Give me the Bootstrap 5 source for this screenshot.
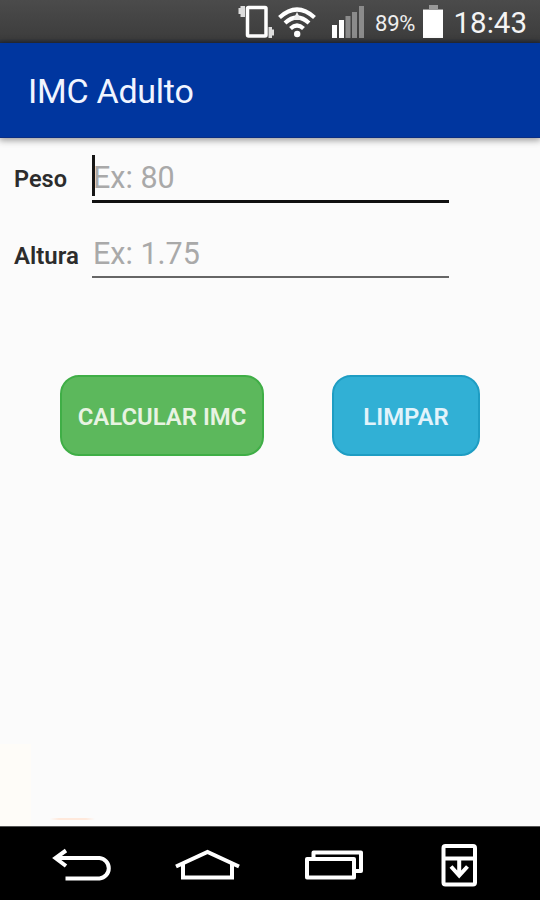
<!DOCTYPE html>
<html lang="pt-BR">
<head>
<meta charset="utf-8">
<meta name="viewport" content="width=device-width, initial-scale=1">
<title>IMC Adulto</title>
<link href="https://cdn.jsdelivr.net/npm/bootstrap@5.3.0/dist/css/bootstrap.min.css" rel="stylesheet">
<style>
body { font-family: Roboto, "Noto Sans", sans-serif; background: #fbfbfb; line-height: 1; }
.screen { width: 540px; height: 900px; }
.status-bar { height: 43px; padding: 0 13px 0 238px; background: linear-gradient(#4b4b4b, #3d3d3d 90%, #292f3d); color: #f4f4f4; }
.status-icons { width: 128px; height: 43px; }
.pct { font-size: 22px; margin: 5px 0 0 9px; width: 48px; letter-spacing: -.2px; color: #eee; }
.battery { width: 21px; height: 43px; }
.clock { font-size: 29.5px; margin: 5px 0 0 auto; }
.title-bar { height: 95px; padding: 2px 28px 0; background: #00369f; box-shadow: 0 1px 7px 1px rgba(0,0,0,.42); border-bottom: 1px solid #0a2d82; z-index: 1; }
.title-bar h1 { font-size: 34px; font-weight: 400; color: #f1f5ff; letter-spacing: -.25px; }
.backdrop {
  background:
    linear-gradient(90deg, transparent, #ffe9dc 20%, #ffe9dc 80%, transparent) 50px 680px / 45px 2px no-repeat,
    linear-gradient(#fefcf8, #fefcf8) 0 606px / 31px 82px no-repeat,
    #fbfbfb;
}
.form-area { padding: 16px 91px 0 14px; }
.field-row { height: 49px; }
.field-row + .field-row { margin-top: 26px; }
.field-row label { width: 78px; font-size: 23.5px; font-weight: 600; color: #2c2c2c; padding-top: 3px; }
.field-row + .field-row label { font-size: 24px; padding-top: 5px; }
.line-input { font-size: 30.5px; height: 49px; padding: 2px 0 0 1px; border: 0; border-bottom: 2px solid #666; background: transparent; border-radius: 0; line-height: 1; }
.line-input::placeholder { color: #a9a9a9; opacity: 1; }
.field-row.active .line-input { border-bottom: 3px solid #111; padding-top: 1px; }
.caret { width: 3px; height: 41px; background: #151515; left: 0; top: 1px; }
.actions { padding: 97px 60px 0; }
.act { height: 81px; border-radius: 19px; font-size: 23.9px; font-weight: 600; border: 2px solid; padding: 4px 0 0; line-height: 1; }
.act-calc { width: 204px; background: #5cb85c; border-color: #3fae46; color: #e8f3e2; }
.act-clear { width: 148px; background: #31b0d5; border-color: #1e9dc3; color: #e2f3fb; }
.nav-keys { height: 74px; background: #000; border-top: 1px solid #555; }
.nav-keys svg { display: block; width: 540px; height: 73px; }
</style>
</head>
<body>
<div class="screen d-flex flex-column overflow-hidden">
  <header class="status-bar d-flex align-items-center flex-shrink-0">
    <svg class="status-icons flex-shrink-0" viewBox="238 0 128 43" fill="none">
      <path d="M240.500 6H245v11h-4.500v-3H238.500V8h2zM268.500 27H272v2.500h2v6H272V38h-3.500z" fill="#ddd"/>
      <rect x="247.500" y="7.500" width="18.500" height="28.500" rx="1" stroke="#fff" stroke-width="3.500"/>
      <g stroke="#fff" stroke-width="4.200">
        <path d="M279.500 17.500Q297 1.500 314.500 17.500M285 23Q297 12 309 23M290.500 28.500Q297 22.500 303.500 28.500"/>
      </g>
      <path d="M297 12l4 8h-8z" fill="#eee"/>
      <circle cx="297.200" cy="34" r="3.200" fill="#fff"/>
      <path d="M332 25h5v13h-5zM339 20h5v18h-5z" fill="#fff"/>
      <path d="M345.500 16h5v22h-5zM352 12h5v26h-5zM359 6h5v32h-5z" fill="#8b8b8b"/>
    </svg>
    <span class="pct">89%</span>
    <svg class="battery" viewBox="423 0 21 43">
      <path d="M429 5h9v4h5v3h-20V9h6z" fill="#999"/>
      <path d="M423 10h20v28h-20z" fill="#fff"/>
    </svg>
    <span class="clock">18:43</span>
  </header>

  <nav class="title-bar d-flex align-items-center position-relative flex-shrink-0">
    <h1 class="mb-0">IMC Adulto</h1>
  </nav>

  <main class="backdrop flex-grow-1">
    <form class="form-area">
      <div class="field-row active d-flex align-items-center">
        <label class="flex-shrink-0" for="peso">Peso</label>
        <div class="position-relative flex-grow-1">
          <input id="peso" class="form-control line-input" placeholder="Ex: 80">
          <span class="caret position-absolute"></span>
        </div>
      </div>
      <div class="field-row d-flex align-items-center">
        <label class="flex-shrink-0" for="altura">Altura</label>
        <div class="flex-grow-1">
          <input id="altura" class="form-control line-input" placeholder="Ex: 1.75">
        </div>
      </div>
    </form>
    <div class="actions d-flex justify-content-between">
      <button type="button" class="btn act act-calc">CALCULAR IMC</button>
      <button type="button" class="btn act act-clear">LIMPAR</button>
    </div>
  </main>

  <footer class="nav-keys flex-shrink-0">
    <svg viewBox="0 827 540 73" fill="none" stroke="#fff" stroke-width="4">
      <path d="M66 850.500L55.500 858L66 866M56 858H99.500A10.300 10.300 0 0 1 99.500 878.500H65.500"/>
      <path d="M176 866.500L207.500 852L239 866.500M183 864V877.500H232V864"/>
      <path d="M313.500 858V852.500H361V871H355M307 859H354V877.500H307z" stroke-linejoin="round"/>
      <rect x="443.500" y="846" width="31.500" height="38.500" rx="2"/>
      <path d="M444 858.500H475M459.200 859V875M451 866.500L459.200 875.500L467.500 866.500"/>
    </svg>
  </footer>
</div>
<script src="https://cdn.jsdelivr.net/npm/bootstrap@5.3.0/dist/js/bootstrap.bundle.min.js"></script>
</body>
</html>
